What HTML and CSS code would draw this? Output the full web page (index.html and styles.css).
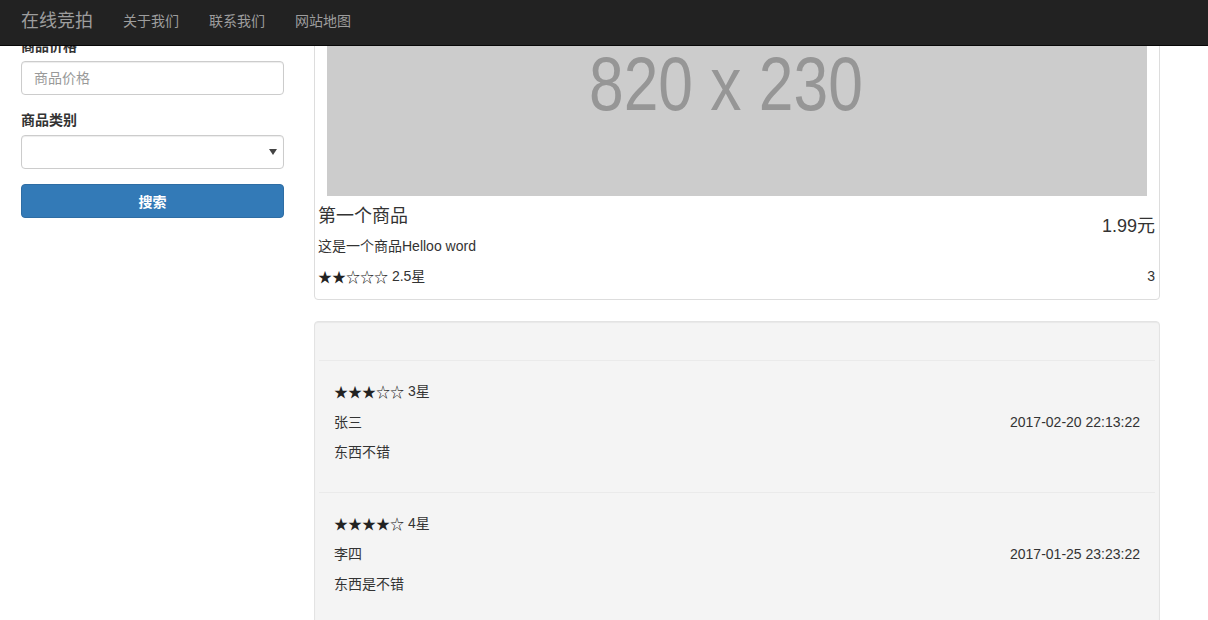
FILE: index.html
```html
<!DOCTYPE html>
<html lang="zh-CN">
<head>
<meta charset="utf-8">
<title>在线竞拍</title>
<link rel="stylesheet" href="styles.css">
</head>
<body>
<nav class="navbar">
  <a class="brand" href="#">在线竞拍</a>
  <ul class="nav">
    <li><a href="#">关于我们</a></li>
    <li><a href="#">联系我们</a></li>
    <li><a href="#">网站地图</a></li>
  </ul>
</nav>

<main class="main">
  <aside class="sidebar">
    <form class="search-form">
      <div class="form-group">
        <label class="label">商品名称</label>
        <input class="form-control" type="text" placeholder="商品名称">
      </div>
      <div class="form-group">
        <label class="label">商品价格</label>
        <input class="form-control" type="text" placeholder="商品价格">
      </div>
      <div class="form-group">
        <label class="label">商品类别</label>
        <select class="form-control select"><option></option></select>
      </div>
      <button class="btn-primary" type="button">搜索</button>
    </form>
  </aside>

  <section class="content">
    <div class="thumbnail">
      <div class="placeholder"><span class="placeholder-text">820 x 230</span></div>
      <div class="caption">
        <div class="caption-head">
          <h4 class="title">第一个商品</h4>
          <h4 class="price">1.99元</h4>
        </div>
        <p class="desc">这是一个商品Helloo word</p>
        <div class="rating-row">
          <p class="rating"><span class="stars">★★☆☆☆</span> 2.5星</p>
          <p class="count">3</p>
        </div>
      </div>
    </div>

    <div class="well">
      <hr class="divider first">
      <div class="comment">
        <p class="rating"><span class="stars">★★★☆☆</span> 3星</p>
        <div class="comment-meta"><span>张三</span><span>2017-02-20 22:13:22</span></div>
        <p class="comment-text">东西不错</p>
      </div>
      <hr class="divider">
      <div class="comment">
        <p class="rating"><span class="stars">★★★★☆</span> 4星</p>
        <div class="comment-meta"><span>李四</span><span>2017-01-25 23:23:22</span></div>
        <p class="comment-text">东西是不错</p>
      </div>
      <hr class="divider">
    </div>
  </section>
</main>
</body>
</html>
```

FILE: styles.css
```css
* { box-sizing: border-box; }

html, body {
  margin: 0;
  padding: 0;
}

body {
  font-family: "Liberation Sans", "Noto Sans CJK SC", sans-serif;
  font-size: 14px;
  line-height: 20px;
  color: #333;
  background: #fff;
}

/* navbar */
.navbar {
  position: fixed;
  top: 0;
  left: 0;
  right: 0;
  z-index: 10;
  height: 46px;
  background: #222;
  border-bottom: 1px solid #080808;
  display: flex;
  align-items: center;
  padding-left: 21px;
}

.brand {
  font-size: 18px;
  line-height: 20px;
  color: #9d9d9d;
  text-decoration: none;
  margin-top: -4px;
}

.nav {
  list-style: none;
  margin: 0 0 0 15px;
  padding: 0;
  display: flex;
}

.nav a {
  display: block;
  padding: 0 15px;
  color: #9d9d9d;
  text-decoration: none;
  font-size: 14px;
  line-height: 20px;
  margin-top: -4px;
}

/* main layout */
.main {
  display: grid;
  grid-template-columns: 263px 846px;
  column-gap: 30px;
  padding-left: 21px;
  margin-top: -39px;
}

.sidebar {
  padding-top: 1px;
}

.form-group {
  margin-bottom: 15px;
}

.label {
  display: block;
  font-weight: bold;
  margin-bottom: 5px;
  line-height: 20px;
}

.form-control {
  display: block;
  width: 100%;
  height: 34px;
  padding: 6px 12px;
  font-family: inherit;
  font-size: 14px;
  color: #555;
  background: #fff;
  border: 1px solid #ccc;
  border-radius: 4px;
  box-shadow: inset 0 1px 1px rgba(0,0,0,.075);
}

.form-control::placeholder {
  color: #999;
}

.select {
  appearance: none;
  -webkit-appearance: none;
  background-image: url("data:image/svg+xml;utf8,<svg xmlns='http://www.w3.org/2000/svg' width='8' height='6'><path d='M0 0 H8 L4 6 Z' fill='%23444'/></svg>");
  background-repeat: no-repeat;
  background-position: right 6px center;
}

.btn-primary {
  display: block;
  width: 100%;
  height: 34px;
  font-family: inherit;
  font-size: 14px;
  font-weight: bold;
  color: #fff;
  background: #337ab7;
  border: 1px solid #2e6da4;
  border-radius: 4px;
  padding-bottom: 2px;
}

/* thumbnail */
.thumbnail {
  border: 1px solid #ddd;
  border-radius: 4px;
  padding: 4px;
  margin-bottom: 21px;
}

.placeholder {
  width: 820px;
  height: 230px;
  margin: 0 auto;
  background: #ccc;
  display: flex;
  align-items: center;
  justify-content: center;
  overflow: hidden;
}

.placeholder-text {
  font-family: "Liberation Sans", sans-serif;
  font-size: 76px;
  line-height: 1;
  color: #969696;
  transform: scaleX(0.82);
  margin-top: 6px;
  margin-right: 22px;
}

.caption {
  margin-left: -1px;
}

.caption-head {
  display: flex;
  justify-content: space-between;
  align-items: flex-start;
}

.title, .price {
  font-size: 18px;
  font-weight: normal;
  line-height: 20px;
  margin: 10px 0 0;
}

.price {
  margin-top: 20px;
}

.desc {
  margin: 0 0 10px;
}

.rating-row {
  display: flex;
  justify-content: space-between;
  margin-bottom: 9px;
}

.rating-row p {
  margin: 0;
}

.stars {
  font-family: "Noto Sans CJK SC", sans-serif;
  font-size: 14px;
  line-height: 14px;
  display: inline-block;
  vertical-align: -1px;
  color: #222;
}

/* well */
.well {
  background: #f4f4f4;
  border: 1px solid #e3e3e3;
  border-radius: 4px;
  box-shadow: inset 0 1px 1px rgba(0,0,0,.05);
  padding: 19px;
  min-height: 320px;
}

.divider {
  border: 0;
  border-top: 1px solid #eaeaea;
  margin: 20px -15px;
}

.divider.first {
  margin-top: 19px;
}

.comment {
  display: flow-root;
}

.comment p {
  margin: 0 0 10px;
}

.comment-meta {
  display: flex;
  justify-content: space-between;
  padding-top: 1px;
  margin-bottom: 10px;
}
```
